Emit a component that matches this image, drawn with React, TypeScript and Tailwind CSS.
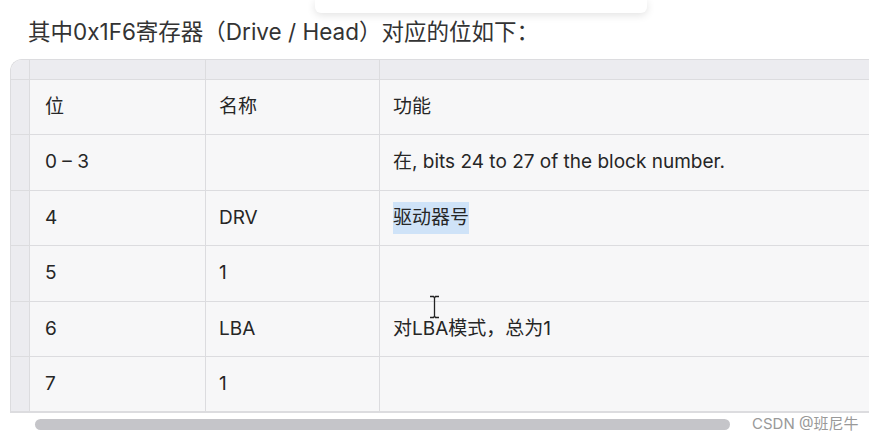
import React from 'react';

const rows: [string, string, React.ReactNode][] = [
  ['0 – 3', '', '在, bits 24 to 27 of the block number.'],
  ['4', 'DRV', <span className="bg-[#cfe3f8] py-[2px]">驱动器号</span>],
  ['5', '1', ''],
  ['6', 'LBA', '对LBA模式，总为1'],
  ['7', '1', ''],
];

const Row: React.FC<{ cells: React.ReactNode[] }> = ({ cells }) => (
  <div className="grid grid-cols-[19px_176px_174px_1fr] h-[55.4px] border-b border-[#dcdcdf]">
    <div className="bg-[#ececf0] border-r border-[#dcdcdf]" />
    <div className="flex items-center pl-[15px] border-r border-[#dcdcdf]">{cells[0]}</div>
    <div className="flex items-center pl-[13px] border-r border-[#dcdcdf]">{cells[1]}</div>
    <div className="flex items-center pl-[13px]">{cells[2]}</div>
  </div>
);

const App: React.FC = () => {
  return (
    <div
      className="relative w-[869px] h-[440px] bg-white overflow-hidden text-[#262626]"
      style={{ fontFamily: 'Inter, "Noto Sans CJK SC", sans-serif' }}
    >
      {/* popup edge at the top */}
      <div className="absolute left-[315px] top-0 w-[332px] h-[13px] bg-white rounded-b-md shadow-[0_2px_8px_rgba(0,0,0,0.12)]" />

      <div className="pt-[19px] pl-[28px] h-[59px] text-[22.5px] leading-[26px] text-[#333]">
        其中0x1F6寄存器（Drive / Head）对应的位如下：
      </div>

      <div className="ml-[10px] w-[900px] rounded-tl-xl overflow-hidden border-l border-t border-b border-[#dcdcdf] bg-[#f7f7f8] text-[19px]">
        {/* top strip */}
        <div className="grid grid-cols-[19px_176px_174px_1fr] h-[20px] bg-[#ececf0] border-b border-[#dcdcdf]">
          <div className="border-r border-[#dcdcdf]" />
          <div className="border-r border-[#dcdcdf]" />
          <div className="border-r border-[#dcdcdf]" />
          <div />
        </div>
        <Row cells={['位', '名称', '功能']} />
        {rows.map((r, i) => (
          <Row key={i} cells={r} />
        ))}
      </div>

      {/* scrollbar + watermark */}
      <div className="flex items-center pl-[35px]">
        <div className="w-[695px] h-[11px] rounded-full bg-[#c5c5c9]" />
        <div className="ml-[22px] text-[15px] text-[#999]">CSDN @班尼牛</div>
      </div>

      {/* text cursor */}
      <svg className="absolute left-[429px] top-[295px]" width="11" height="24" viewBox="0 0 11 24">
        <path d="M1 1.5h3.5L5.5 3l1-1.5H10M5.5 3v18M1 22.5h3.5l1-1.5 1 1.5H10" fill="none" stroke="#222" strokeWidth="1.3" />
      </svg>
    </div>
  );
};

export default App;
